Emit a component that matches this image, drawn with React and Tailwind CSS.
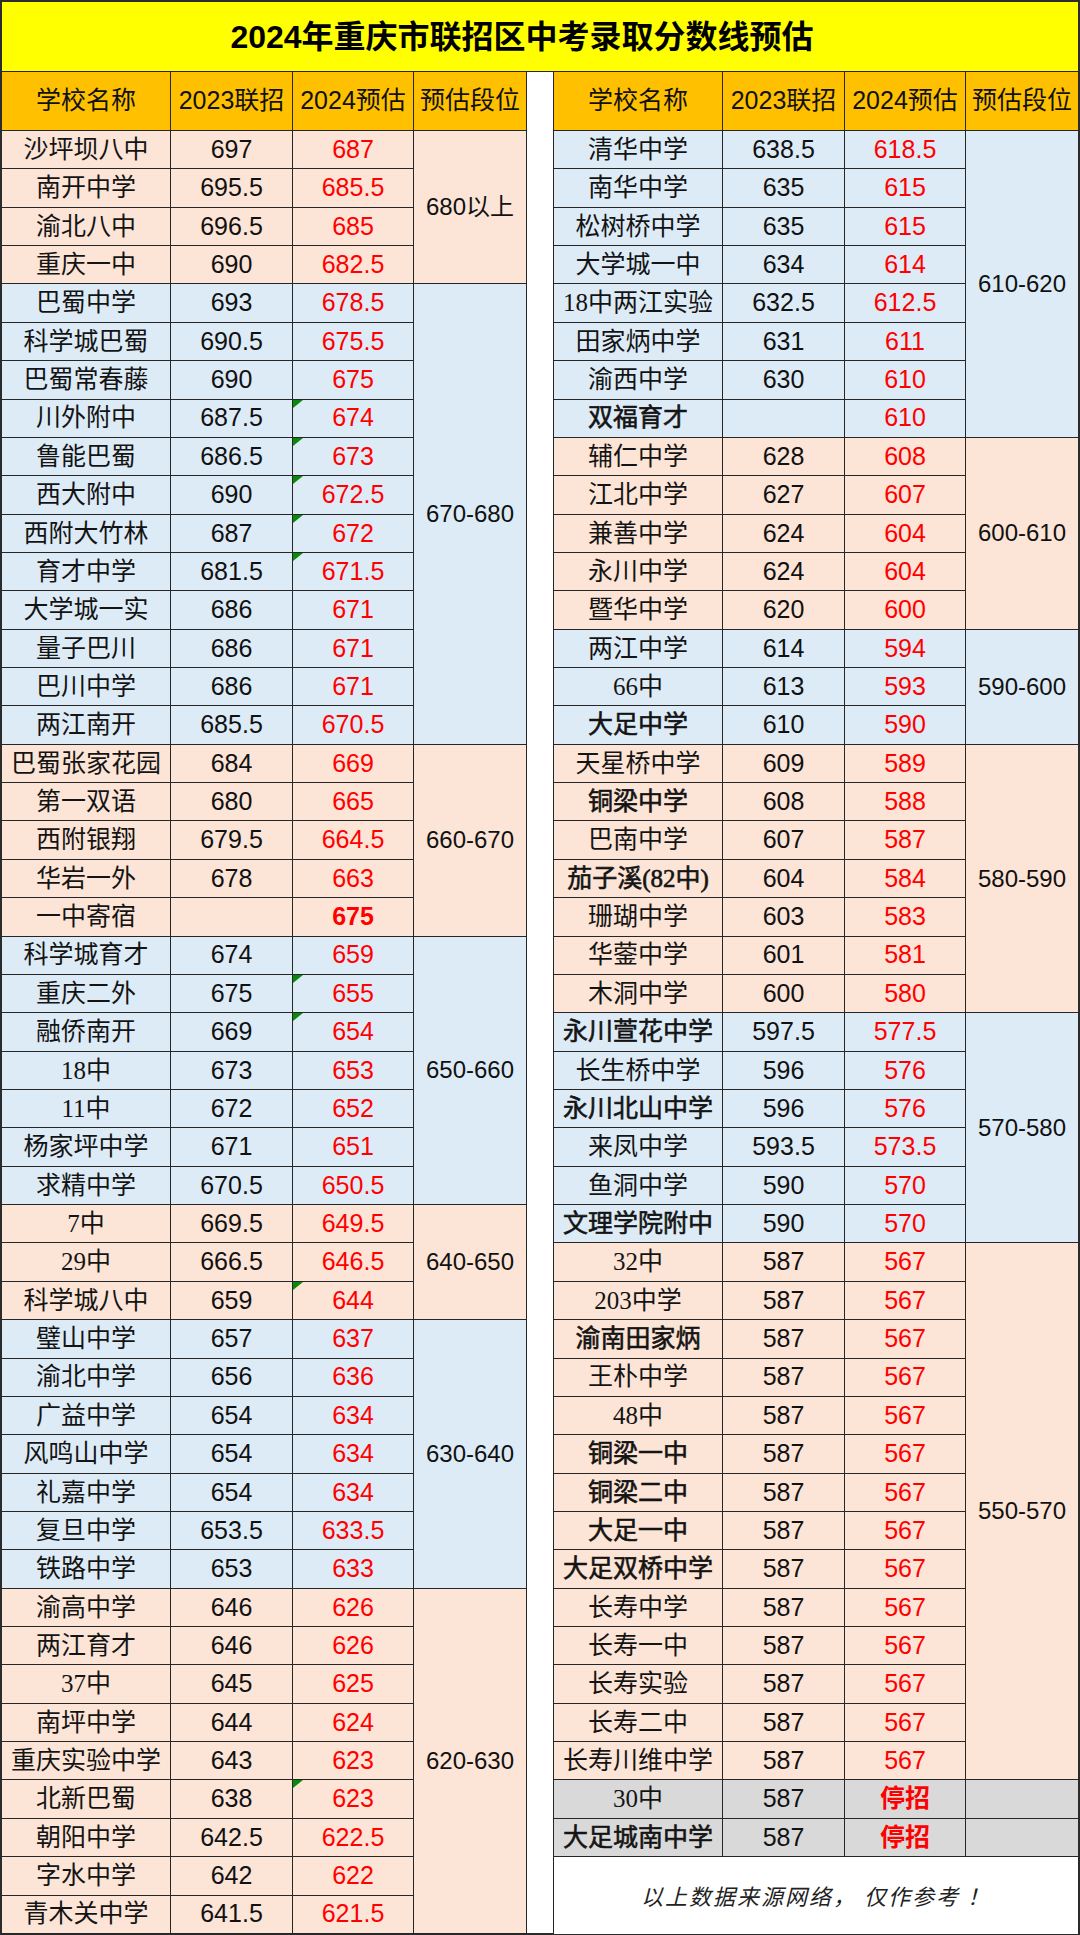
const PEACH = "bg-[#fce4d6]";
const BLUE = "bg-[#ddebf7]";
const GRAY = "bg-[#d9d9d9]";

const left = [
  { band: "680以上", bg: PEACH, rows: [
    ["沙坪坝八中", "697", "687"],
    ["南开中学", "695.5", "685.5"],
    ["渝北八中", "696.5", "685"],
    ["重庆一中", "690", "682.5"],
  ] },
  { band: "670-680", bg: BLUE, rows: [
    ["巴蜀中学", "693", "678.5"],
    ["科学城巴蜀", "690.5", "675.5"],
    ["巴蜀常春藤", "690", "675"],
    ["川外附中", "687.5", "674", { flag: true }],
    ["鲁能巴蜀", "686.5", "673", { flag: true }],
    ["西大附中", "690", "672.5", { flag: true }],
    ["西附大竹林", "687", "672", { flag: true }],
    ["育才中学", "681.5", "671.5", { flag: true }],
    ["大学城一实", "686", "671"],
    ["量子巴川", "686", "671"],
    ["巴川中学", "686", "671"],
    ["两江南开", "685.5", "670.5"],
  ] },
  { band: "660-670", bg: PEACH, rows: [
    ["巴蜀张家花园", "684", "669"],
    ["第一双语", "680", "665"],
    ["西附银翔", "679.5", "664.5"],
    ["华岩一外", "678", "663"],
    ["一中寄宿", "", "675", { boldScore: true }],
  ] },
  { band: "650-660", bg: BLUE, rows: [
    ["科学城育才", "674", "659"],
    ["重庆二外", "675", "655", { flag: true }],
    ["融侨南开", "669", "654", { flag: true }],
    ["18中", "673", "653"],
    ["11中", "672", "652"],
    ["杨家坪中学", "671", "651"],
    ["求精中学", "670.5", "650.5"],
  ] },
  { band: "640-650", bg: PEACH, rows: [
    ["7中", "669.5", "649.5"],
    ["29中", "666.5", "646.5"],
    ["科学城八中", "659", "644", { flag: true }],
  ] },
  { band: "630-640", bg: BLUE, rows: [
    ["璧山中学", "657", "637"],
    ["渝北中学", "656", "636"],
    ["广益中学", "654", "634"],
    ["风鸣山中学", "654", "634"],
    ["礼嘉中学", "654", "634"],
    ["复旦中学", "653.5", "633.5"],
    ["铁路中学", "653", "633"],
  ] },
  { band: "620-630", bg: PEACH, rows: [
    ["渝高中学", "646", "626"],
    ["两江育才", "646", "626"],
    ["37中", "645", "625"],
    ["南坪中学", "644", "624"],
    ["重庆实验中学", "643", "623"],
    ["北新巴蜀", "638", "623", { flag: true }],
    ["朝阳中学", "642.5", "622.5"],
    ["字水中学", "642", "622"],
    ["青木关中学", "641.5", "621.5"],
  ] },
];

const B = { bold: true };

const right = [
  { band: "610-620", bg: BLUE, rows: [
    ["清华中学", "638.5", "618.5"],
    ["南华中学", "635", "615"],
    ["松树桥中学", "635", "615"],
    ["大学城一中", "634", "614"],
    ["18中两江实验", "632.5", "612.5"],
    ["田家炳中学", "631", "611"],
    ["渝西中学", "630", "610"],
    ["双福育才", "", "610", B],
  ] },
  { band: "600-610", bg: PEACH, rows: [
    ["辅仁中学", "628", "608"],
    ["江北中学", "627", "607"],
    ["兼善中学", "624", "604"],
    ["永川中学", "624", "604"],
    ["暨华中学", "620", "600"],
  ] },
  { band: "590-600", bg: BLUE, rows: [
    ["两江中学", "614", "594"],
    ["66中", "613", "593"],
    ["大足中学", "610", "590", B],
  ] },
  { band: "580-590", bg: PEACH, rows: [
    ["天星桥中学", "609", "589"],
    ["铜梁中学", "608", "588", B],
    ["巴南中学", "607", "587"],
    ["茄子溪(82中)", "604", "584", B],
    ["珊瑚中学", "603", "583"],
    ["华蓥中学", "601", "581"],
    ["木洞中学", "600", "580"],
  ] },
  { band: "570-580", bg: BLUE, rows: [
    ["永川萱花中学", "597.5", "577.5", B],
    ["长生桥中学", "596", "576"],
    ["永川北山中学", "596", "576", B],
    ["来凤中学", "593.5", "573.5"],
    ["鱼洞中学", "590", "570"],
    ["文理学院附中", "590", "570", B],
  ] },
  { band: "550-570", bg: PEACH, rows: [
    ["32中", "587", "567"],
    ["203中学", "587", "567"],
    ["渝南田家炳", "587", "567", B],
    ["王朴中学", "587", "567"],
    ["48中", "587", "567"],
    ["铜梁一中", "587", "567", B],
    ["铜梁二中", "587", "567", B],
    ["大足一中", "587", "567", B],
    ["大足双桥中学", "587", "567", B],
    ["长寿中学", "587", "567"],
    ["长寿一中", "587", "567"],
    ["长寿实验", "587", "567"],
    ["长寿二中", "587", "567"],
    ["长寿川维中学", "587", "567"],
  ] },
  { band: null, bg: GRAY, rows: [
    ["30中", "587", "停招", { stop: true }],
    ["大足城南中学", "587", "停招", { stop: true, bold: true }],
  ] },
];

function Flag() {
  return (
    <svg className="absolute left-0 top-0" width="10" height="8" viewBox="0 0 10 8">
      <polygon points="0,0 10,0 0,8" fill="#0a8a0a" />
    </svg>
  );
}

function Row({ row, withBand }) {
  const [name, a, b, o = {}] = row;
  return (
    <div className="flex h-[38.36px] border-b border-[#262626]">
      <div className={`w-[169px] shrink-0 flex items-center justify-center border-r border-[#262626] text-[25px] text-[#141414] font-['Liberation_Serif','Noto_Sans_CJK_SC',serif] ${o.bold ? "[-webkit-text-stroke:0.6px_#141414]" : ""}`}>
        {name}
      </div>
      <div className="w-[122px] shrink-0 flex items-center justify-center border-r border-[#262626] text-[25px] text-[#111] font-['Liberation_Sans','Noto_Sans_CJK_SC',sans-serif]">
        {a}
      </div>
      <div className={`relative w-[121px] shrink-0 flex items-center justify-center border-r border-[#262626] text-[25px] text-[#ff0000] font-['Liberation_Sans','Noto_Sans_CJK_SC',sans-serif] ${o.boldScore || o.stop ? "font-bold" : ""}`}>
        {o.flag && <Flag />}
        {b}
      </div>
      {withBand && <div className="flex-1" />}
    </div>
  );
}

function Group({ g }) {
  if (!g.band) {
    return (
      <div className={g.bg}>
        {g.rows.map((r) => (
          <Row key={r[0]} row={r} withBand />
        ))}
      </div>
    );
  }
  return (
    <div className={`flex ${g.bg}`}>
      <div className="flex flex-col w-[412px] shrink-0">
        {g.rows.map((r) => (
          <Row key={r[0]} row={r} />
        ))}
      </div>
      <div className="flex-1 flex items-center justify-center border-b border-[#262626] text-[24px] text-[#111] font-['Liberation_Sans','Noto_Sans_CJK_SC',sans-serif]">
        {g.band}
      </div>
    </div>
  );
}

function Header() {
  const cell = "shrink-0 flex items-center justify-center border-r border-[#262626]";
  return (
    <div className="flex h-[59px] bg-[#ffc000] border-b border-[#262626] text-[25px] text-[#111] font-['Liberation_Sans','Noto_Sans_CJK_SC',sans-serif]">
      <div className={`w-[169px] ${cell}`}>学校名称</div>
      <div className={`w-[122px] ${cell}`}>2023联招</div>
      <div className={`w-[121px] ${cell}`}>2024预估</div>
      <div className="flex-1 flex items-center justify-center">预估段位</div>
    </div>
  );
}

function Table({ groups, footer, className }) {
  return (
    <div className={`w-[525px] flex flex-col ${className}`}>
      <Header />
      {groups.map((g, i) => (
        <Group key={i} g={g} />
      ))}
      {footer && (
        <div className="flex-1 flex items-center justify-center bg-white text-[22px] italic tracking-[2px] text-[#222] font-['Noto_Sans_CJK_SC',sans-serif]">
          以上数据来源网络， 仅作参考 ！
        </div>
      )}
    </div>
  );
}

export default function App() {
  return (
    <div className="w-[1080px] h-[1935px] bg-white border-2 border-[#2b2b2b] flex flex-col">
      <div className="h-[70px] shrink-0 bg-[#ffff00] border-b border-[#262626] flex items-center justify-center pr-[36px] text-[32px] font-bold text-black font-['Liberation_Sans','Noto_Sans_CJK_SC',sans-serif]">
        2024年重庆市联招区中考录取分数线预估
      </div>
      <div className="flex-1 flex justify-between">
        <Table groups={left} className="border-r border-[#262626]" />
        <Table groups={right} footer className="border-l border-[#262626]" />
      </div>
    </div>
  );
}
